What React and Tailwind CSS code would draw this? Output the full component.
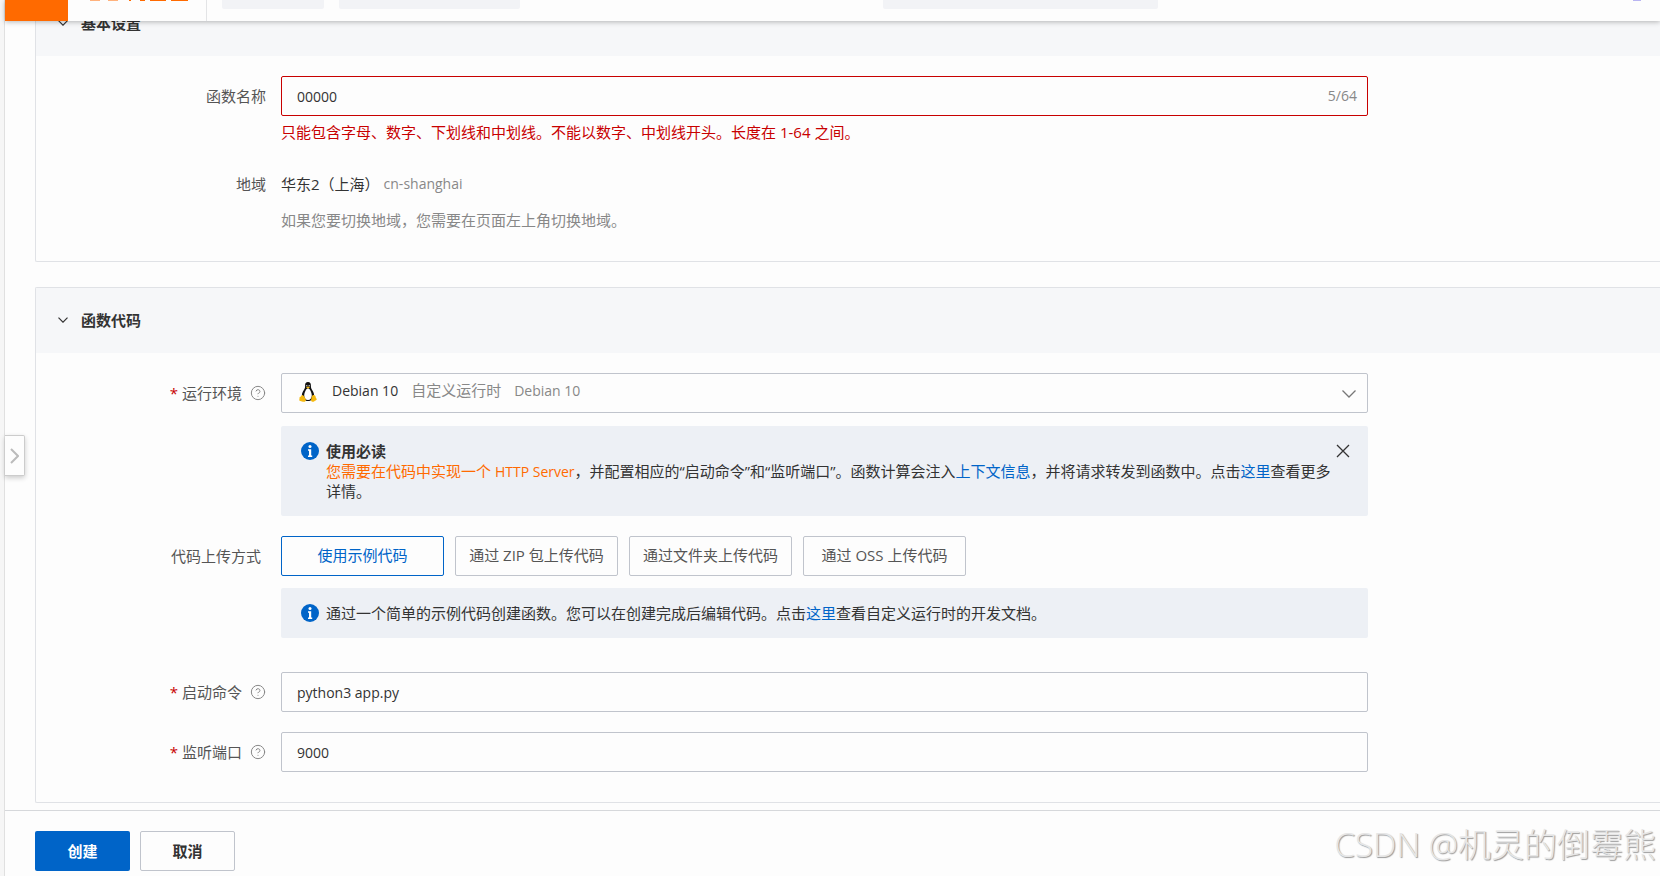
import { CircleHelp } from 'lucide-react'

const UPLOAD_METHODS = [
  { id: 'sample', label: '使用示例代码' },
  { id: 'zip', label: '通过 ZIP 包上传代码' },
  { id: 'folder', label: '通过文件夹上传代码' },
  { id: 'oss', label: '通过 OSS 上传代码' },
]

const INPUT =
  'h-10 w-full rounded-xs border bg-[#fdfdfd] pl-[15px] pr-3 text-sm text-[#333] outline-none'

function Tux() {
  return (
    <svg viewBox="0 0 18 20" className="h-5 w-[18px]" aria-hidden="true">
      <path
        d="M9 0C6.900 0 6 1.500 6.100 3.500c.1 2-.2 3-1.400 4.800C3.600 10 2.900 11.700 2.900 13.500c0 3.300 2.400 5.500 6.100 5.500s6.100-2.200 6.100-5.500c0-1.800-.7-3.500-1.800-5.200C12.100 6.500 11.900 5.500 11.900 3.500 12 1.500 11.100 0 9 0z"
        fill="#111"
      />
      <path
        d="M9 6.500c-1.200 0-1.700.5-2.100 1.600-.5 1.400-1.700 3-1.700 5.400 0 2.700 1.500 4.500 3.800 4.500s3.800-1.800 3.800-4.500c0-2.400-1.200-4-1.700-5.400C10.700 7 10.200 6.500 9 6.500z"
        fill="#fff"
      />
      <circle cx="7.800" cy="3.800" r="0.700" fill="#ddd" />
      <circle cx="10.200" cy="3.800" r="0.700" fill="#ddd" />
      <path d="M7 5.300 9 4.400l2 .9-2 1.500z" fill="#f5b90f" />
      <path
        d="M3.300 13c.9 0 1.700 1.300 2.500 2.500.8 1 1.400 2.100.9 3.200-.6 1.300-2.300 1.400-3.700.8-1.300-.4-2.500-.4-2.700-1.300-.1-.7.3-1.200.2-2-.1-.9.200-1.400 1-1.500.9-.2.800-1.700 1.800-1.700zM14.700 13c-.9 0-1.700.6-2 1.900-.3 1.300-.9 2.600-.5 3.900.4 1.300 1.900 1.300 2.900.6 1-.7 2.600-1.200 2.700-2.100.1-.8-.9-1-1-1.900-.1-1-.9-2.400-2.100-2.400z"
        fill="#f5b90f"
      />
    </svg>
  )
}

function InfoIcon() {
  return (
    <svg viewBox="0 0 18 18" className="mt-px size-[18px] shrink-0" aria-hidden="true">
      <circle cx="9" cy="9" r="9" fill="#0064c8" />
      <circle cx="9" cy="4.500" r="1.500" fill="#fff" />
      <path d="M7 7.300h3.200v6.200h1V15H7v-1.500h1V8.800H7z" fill="#fff" />
    </svg>
  )
}

function Section({ title, children }) {
  return (
    <section className="rounded-l-xs border border-r-0 border-[#e0e2e6] bg-[#fdfdfd]">
      <h2 className="bg-[#f6f7f9]">
        <button className="flex h-[65px] w-full items-center gap-[13px] pb-px pl-[22px] text-[15px] font-bold text-[#333]">
          <svg viewBox="0 0 10 6" className="h-[6px] w-[10px]" fill="none" stroke="currentColor">
            <path d="M0.500 0.700 5 5.200l4.500-4.500" strokeWidth="1.200" />
          </svg>
          {title}
        </button>
      </h2>
      {children}
    </section>
  )
}

function Row({ label, htmlFor, required, help, labelClass = 'pr-[15px]', children }) {
  return (
    <div className="flex">
      <div
        className={`flex h-10 w-[245px] shrink-0 items-center justify-end text-[#555] ${labelClass}`}
      >
        {required && <span className="mr-1 text-[#c80000]">*</span>}
        <label htmlFor={htmlFor}>{label}</label>
        {help && (
          <button aria-label={`${label}说明`} className="ml-2 text-[#888]">
            <CircleHelp size={16} strokeWidth={1.500} />
          </button>
        )}
      </div>
      <div className="min-w-0 flex-1">{children}</div>
    </div>
  )
}

function Notice({ children, onClose }) {
  return (
    <div className="flex rounded-xs bg-[#edf0f5] py-[15px] pl-5 pr-[18px] leading-5 text-[#333]">
      <InfoIcon />
      <div className="ml-[7px] flex-1">{children}</div>
      {onClose && (
        <button aria-label="关闭" className="h-5 shrink-0 text-[#333]">
          <svg viewBox="0 0 14 14" className="size-[14px]" fill="none" stroke="currentColor">
            <path d="M1 1l12 12M13 1 1 13" strokeWidth="1.300" />
          </svg>
        </button>
      )}
    </div>
  )
}

export default function App() {
  return (
    <div className="flex h-screen overflow-hidden bg-[#fdfdfd] font-['Open_Sans','Noto_Sans_CJK_SC',sans-serif] text-[15px] text-[#333]">
      <div className="w-[5px] shrink-0 border-r border-[#e0e0e0] bg-[#f6f6f6]" />

      <div className="relative flex min-w-0 flex-1 flex-col">
        {/* Top bar, scrolled partly out of view */}
        <header className="z-10 flex h-[21px] shrink-0 items-end overflow-hidden bg-[#fdfdfd] shadow-[0_1px_5px_rgba(0,0,0,0.28)]">
          <div className="h-full w-[63px] bg-[#ff6a00]" />
          <div className="flex h-full w-[139px] items-start border-r border-[#e3e4e6] pl-5">
            <svg viewBox="0 0 102 2" className="h-[2px] w-[102px]" aria-hidden="true">
              <path d="M2 0h10v1H2zM20 0h10v1H20z" fill="#ffb27d" />
              <path d="M41 0h2v1h-2zM52 0h5v1h-5zM62 0h16v1H62zM83 0h17v1H83z" fill="#ff6a00" />
            </svg>
          </div>
          <div className="flex h-full flex-1 items-start">
            <div className="ml-[15px] h-[9px] w-[102px] rounded-b-xs bg-[#f2f3f6]" />
            <div className="ml-[15px] h-[9px] w-[181px] rounded-b-xs bg-[#f2f3f6]" />
            <div className="ml-[363px] h-[9px] w-[275px] rounded-b-xs bg-[#f2f3f6]" />
            <div className="ml-auto mr-[19px] h-px w-2 bg-[#b9b5f2]" />
          </div>
        </header>

        <main className="flex min-h-0 flex-1 flex-col gap-[25px] overflow-hidden pl-[30px]">
          <div className="-mt-[31px]">
            <Section title="基本设置">
              <div className="max-w-[1332px] pb-[31px] pt-5">
                <Row label="函数名称" htmlFor="fn-name">
                  <div className="relative">
                    <input id="fn-name" defaultValue="00000" className={`${INPUT} border-[#c80000]`} />
                    <span className="absolute right-[11px] top-[10px] text-sm text-[#888]">5/64</span>
                  </div>
                  <p className="mt-[6px] leading-5 text-[#c80000]">
                    只能包含字母、数字、下划线和中划线。不能以数字、中划线开头。长度在{' '}
                    <span className="leading-none">1-64</span> 之间。
                  </p>
                </Row>
                <div className="mt-[22px]">
                  <Row label="地域">
                    <p className="flex h-10 items-center">
                      华东2（上海）
                      <span className="ml-1 text-sm text-[#888]">cn-shanghai</span>
                    </p>
                    <p className="mt-[6px] leading-5 text-[#888]">
                      如果您要切换地域，您需要在页面左上角切换地域。
                    </p>
                  </Row>
                </div>
              </div>
            </Section>
          </div>

          <Section title="函数代码">
            <div className="flex max-w-[1332px] flex-col gap-5 pb-[30px] pt-5">
              <Row label="运行环境" required help>
                <button className="flex h-10 w-full items-center rounded-xs border border-[#c0c4cc] bg-[#fdfdfd] pb-[5px] pl-[17px] pr-[11px]">
                  <span className="mt-[3px]">
                    <Tux />
                  </span>
                  <span className="ml-[15px] text-sm text-[#333]">Debian 10</span>
                  <span className="ml-[13px] text-[#888]">自定义运行时</span>
                  <span className="ml-[13px] text-sm text-[#888]">Debian 10</span>
                  <svg
                    viewBox="0 0 14 8"
                    className="ml-auto mt-[6px] h-2 w-[14px] text-[#777]"
                    fill="none"
                    stroke="currentColor"
                  >
                    <path d="M0.500 0.500 7 7l6.500-6.500" strokeWidth="1.300" />
                  </svg>
                </button>
                <div className="mt-[13px]">
                  <Notice onClose>
                    <strong className="block">使用必读</strong>
                    <span className="text-[#ff6a00]">
                      您需要在代码中实现一个 <span className="text-sm leading-none">HTTP Server</span>
                    </span>
                    ，并配置相应的“启动命令”和“监听端口”。函数计算会注入
                    <a href="#context" className="text-[#0064c8]">上下文信息</a>
                    ，并将请求转发到函数中。点击
                    <a href="#docs" className="text-[#0064c8]">这里</a>
                    查看更多详情。
                  </Notice>
                </div>
              </Row>

              <Row label="代码上传方式" labelClass="pr-5">
                <div className="flex gap-[11px]">
                  {UPLOAD_METHODS.map((m) => (
                    <button
                      key={m.id}
                      className={`h-10 w-[163px] rounded-xs border bg-[#fdfdfd] pb-px ${
                        m.id === 'sample'
                          ? 'border-[#0064c8] text-[#0064c8]'
                          : 'border-[#c0c4cc] text-[#555]'
                      }`}
                    >
                      {m.label}
                    </button>
                  ))}
                </div>
                <div className="mb-[14px] mt-3">
                  <Notice>
                    通过一个简单的示例代码创建函数。您可以在创建完成后编辑代码。点击
                    <a href="#runtime" className="text-[#0064c8]">这里</a>
                    查看自定义运行时的开发文档。
                  </Notice>
                </div>
              </Row>

              <Row label="启动命令" htmlFor="command" required help>
                <input id="command" defaultValue="python3 app.py" className={`${INPUT} border-[#c0c4cc]`} />
              </Row>
              <Row label="监听端口" htmlFor="port" required help>
                <input id="port" defaultValue="9000" className={`${INPUT} border-[#c0c4cc]`} />
              </Row>
            </div>
          </Section>
        </main>

        <footer className="flex h-[66px] shrink-0 items-start gap-[10px] border-t border-[#d6d8db] bg-[#fdfdfd] pl-[30px] pt-5 font-bold">
          <button className="h-10 w-[95px] rounded-xs bg-[#0064c8] text-white">创建</button>
          <button className="h-10 w-[95px] rounded-xs border border-[#c0c4cc] bg-[#fdfdfd]">取消</button>
        </footer>

        {/* Drawer handle */}
        <button
          aria-label="展开侧栏"
          className="absolute left-0 top-[435px] flex h-[41px] w-5 items-center justify-center rounded-r-xs border border-l-0 border-[#ccc] bg-[#fdfdfd] text-[#bbb] shadow-[0_2px_5px_rgba(0,0,0,0.2)]"
        >
          <svg viewBox="0 0 9 16" className="h-4 w-[9px]" fill="none" stroke="currentColor">
            <path d="M1 1l7 7-7 7" strokeWidth="2" />
          </svg>
        </button>

        <p className="pointer-events-none absolute bottom-[11px] right-1 whitespace-nowrap text-[33px] font-light leading-10 text-[#e6e6e6] [text-shadow:1px_1px_1px_#999]">
          CSDN @机灵的倒霉熊
        </p>
      </div>
    </div>
  )
}
